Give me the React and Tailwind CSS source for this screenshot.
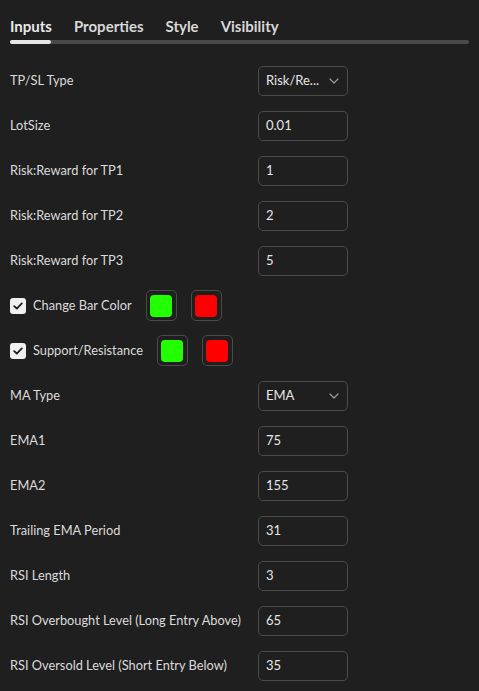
import React from "react";

const Chevron = () => (
  <svg width="10" height="6" viewBox="0 0 10 6" className="shrink-0">
    <path d="M1 1 L5 5 L9 1" fill="none" stroke="#9a9a9a" strokeWidth="1.2" strokeLinecap="round" strokeLinejoin="round" />
  </svg>
);

const Check = () => (
  <svg width="10" height="8" viewBox="0 0 10 8">
    <path d="M1.2 4.2 L3.8 6.6 L8.8 1.4" fill="none" stroke="#1f1f1f" strokeWidth="1.8" strokeLinecap="round" strokeLinejoin="round" />
  </svg>
);

function Row({ label, children }) {
  return (
    <div className="flex h-[45px] items-center">
      <div className="w-[248px] shrink-0 whitespace-nowrap text-[12.8px] text-[#dbdbdb]">{label}</div>
      {children}
    </div>
  );
}

function Box({ value, select }) {
  return (
    <div className="flex h-[30px] w-[90px] items-center justify-between rounded-[5px] border border-[#4a4a4a] pl-[7px] pr-[8px] text-[13px] text-[#e6e6e6]">
      <span>{value}</span>
      {select && <Chevron />}
    </div>
  );
}

function Swatch({ color }) {
  return (
    <div className="flex h-[31px] w-[31px] items-center justify-center rounded-[5px] border border-[#4a4a4a]">
      <div className={`h-[22px] w-[22px] rounded-[4px] ${color}`} />
    </div>
  );
}

function CheckRow({ label }) {
  return (
    <div className="flex h-[45px] items-center">
      <div className="flex h-[16px] w-[16px] items-center justify-center rounded-[3px] bg-[#f0f0f0]">
        <Check />
      </div>
      <div className="ml-[7px] text-[12.8px] text-[#dbdbdb]">{label}</div>
      <div className="ml-[14px] flex gap-[14px]">
        <Swatch color="bg-[#22ff00]" />
        <Swatch color="bg-[#ff0000]" />
      </div>
    </div>
  );
}

export default function App() {
  return (
    <div
      className="h-[691px] w-[479px] overflow-hidden bg-[#1f1f1f] px-[10px]"
      style={{ fontFamily: 'Lato, "Noto Sans", sans-serif' }}
    >
      <div className="flex gap-[22px] pt-[16px] text-[15px] font-bold leading-[20px] text-[#d8d8d8]">
        <span className="text-[#e8e8e8]">Inputs</span>
        <span>Properties</span>
        <span>Style</span>
        <span>Visibility</span>
      </div>
      <div className="mt-[4px] h-[4px] rounded-full bg-[#4a4a4a]">
        <div className="h-[4px] w-[41px] rounded-full bg-[#e6e6e6]" />
      </div>
      <div className="mt-[14px]">
        <Row label="TP/SL Type"><Box value="Risk/Re..." select /></Row>
        <Row label="LotSize"><Box value="0.01" /></Row>
        <Row label="Risk:Reward for TP1"><Box value="1" /></Row>
        <Row label="Risk:Reward for TP2"><Box value="2" /></Row>
        <Row label="Risk:Reward for TP3"><Box value="5" /></Row>
        <CheckRow label="Change Bar Color" />
        <CheckRow label="Support/Resistance" />
        <Row label="MA Type"><Box value="EMA" select /></Row>
        <Row label="EMA1"><Box value="75" /></Row>
        <Row label="EMA2"><Box value="155" /></Row>
        <Row label="Trailing EMA Period"><Box value="31" /></Row>
        <Row label="RSI Length"><Box value="3" /></Row>
        <Row label="RSI Overbought Level (Long Entry Above)"><Box value="65" /></Row>
        <Row label="RSI Oversold Level (Short Entry Below)"><Box value="35" /></Row>
      </div>
    </div>
  );
}
